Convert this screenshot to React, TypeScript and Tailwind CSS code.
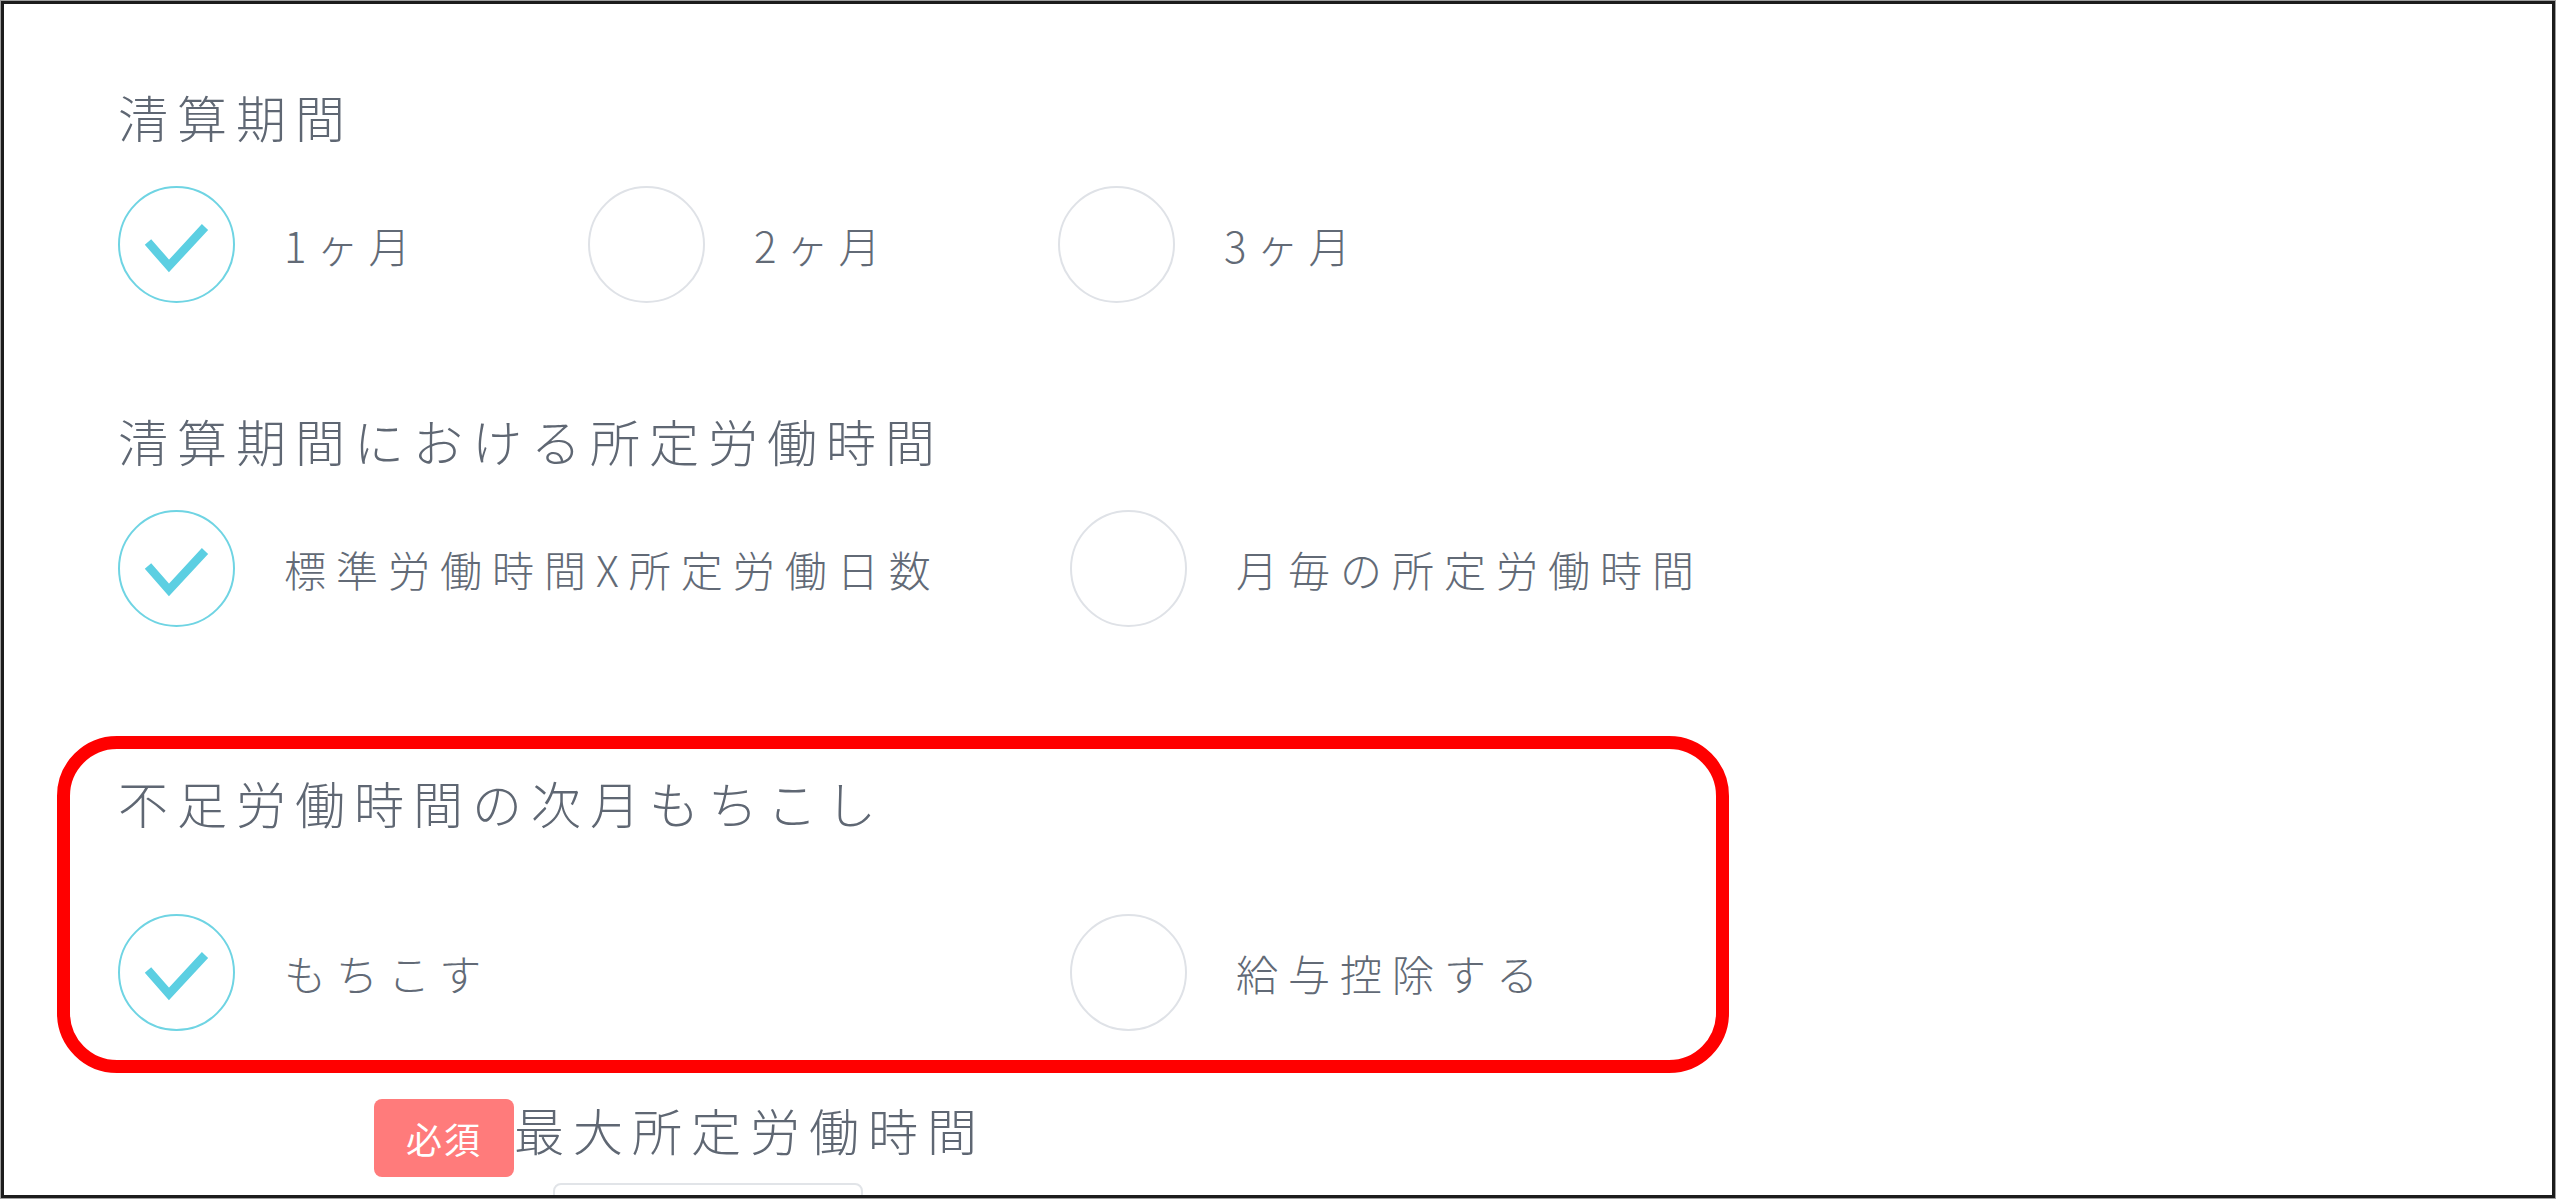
import React from "react";

type Option = { label: string; checked: boolean };

const FONT = "font-['Noto_Sans_CJK_JP','Noto_Sans',sans-serif]";

// Radio-like circle; checked state draws the cyan tick.
function Circle({ checked }: { checked: boolean }) {
  return (
    <div
      className={`relative h-[117px] w-[117px] shrink-0 rounded-full border-2 ${
        checked ? "border-[#6fd4e3]" : "border-[#dfe2e7]"
      }`}
    >
      {checked && (
        <svg
          viewBox="0 0 117 117"
          className="absolute -left-[2px] -top-[2px] h-[117px] w-[117px]"
        >
          <path
            d="M30 56 L51 80 L87 41"
            fill="none"
            stroke="#5ccfe2"
            strokeWidth="8.5"
            strokeLinecap="butt"
            strokeLinejoin="miter"
          />
        </svg>
      )}
    </div>
  );
}

function OptionRow({ options, slot }: { options: Option[]; slot: string }) {
  return (
    <div className="flex h-[117px]">
      {options.map((o) => (
        <div key={o.label} className={`flex shrink-0 items-center ${slot}`}>
          <Circle checked={o.checked} />
          <span className="ml-[49px] whitespace-nowrap text-[42px] leading-none tracking-[10px] text-[#626a76]">
            {o.label}
          </span>
        </div>
      ))}
    </div>
  );
}

function Title({ children }: { children: React.ReactNode }) {
  return (
    <div className="h-[60px] whitespace-nowrap text-[50px] leading-[60px] tracking-[9px] text-[#5f6773]">
      {children}
    </div>
  );
}

export default function App() {
  return (
    <div className="bg-[#a0a0a0] p-px">
      <div
        className={`h-[1197px] overflow-hidden border-[3px] border-[#1c1c1c] bg-white font-light ${FONT}`}
      >
        <div className="pl-[53px] pt-[82px]">
          <section className="pl-[61px]">
            <Title>清算期間</Title>
            <div className="mt-[40px]">
              <OptionRow
                slot="w-[470px]"
                options={[
                  { label: "1ヶ月", checked: true },
                  { label: "2ヶ月", checked: false },
                  { label: "3ヶ月", checked: false },
                ]}
              />
            </div>
          </section>

          <section className="mt-[107px] pl-[61px]">
            <Title>清算期間における所定労働時間</Title>
            <div className="mt-[40px]">
              <OptionRow
                slot="w-[952px]"
                options={[
                  { label: "標準労働時間X所定労働日数", checked: true },
                  { label: "月毎の所定労働時間", checked: false },
                ]}
              />
            </div>
          </section>

          {/* highlighted block */}
          <section className="mt-[109px] w-[1672px] overflow-hidden rounded-[60px] border-[13px] border-[#ff0000] pb-[29px] pl-[48px] pt-[23px]">
            <Title>不足労働時間の次月もちこし</Title>
            <div className="mt-[82px]">
              <OptionRow
                slot="w-[952px]"
                options={[
                  { label: "もちこす", checked: true },
                  { label: "給与控除する", checked: false },
                ]}
              />
            </div>
          </section>

          <section className="mt-[26px] pl-[61px]">
            <div className="ml-[256px] flex items-start">
              <span className="flex h-[78px] w-[140px] items-center justify-center rounded-[8px] bg-[#ff7b7b] text-[36px] font-normal tracking-[2px] text-white">
                必須
              </span>
              <Title>最大所定労働時間</Title>
            </div>
            <div className="ml-[435px] mt-[6px] h-[60px] w-[310px] rounded-[8px] border-2 border-[#e1e4e8]" />
          </section>
        </div>
      </div>
    </div>
  );
}
